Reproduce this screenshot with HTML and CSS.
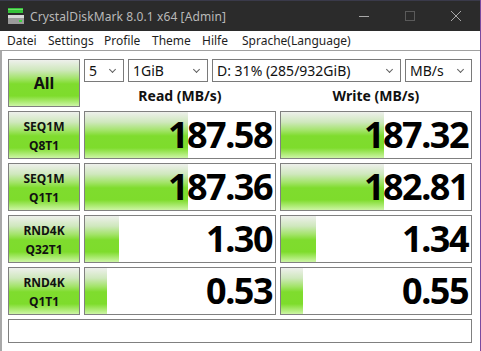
FILE: index.html
```html
<!DOCTYPE html>
<html>
<head>
<meta charset="utf-8">
<link rel="stylesheet" href="styles.css">
</head>
<body>
<div class="window">
  <div class="titlebar">
    <svg class="appicon" width="16" height="16" viewBox="0 0 16 16">
      <rect x="0" y="0" width="15" height="5" fill="#35c23a"/>
      <rect x="0" y="1" width="15" height="1" fill="#6fe06a"/>
      <rect x="0" y="7" width="16" height="9" fill="#9a9a9a"/>
      <rect x="0" y="7" width="16" height="3" fill="#d8d8d8"/>
      <rect x="11" y="12" width="3" height="2" fill="#3ad13a"/>
    </svg>
    <span class="title">CrystalDiskMark 8.0.1 x64 [Admin]</span>
    <div class="controls">
      <svg width="12" height="12" viewBox="0 0 12 12"><line x1="1" y1="6.5" x2="11" y2="6.5" stroke="#a8a8a8" stroke-width="1"/></svg>
      <svg width="12" height="12" viewBox="0 0 12 12"><rect x="1.5" y="1.5" width="9" height="9" fill="none" stroke="#5a5a5a" stroke-width="1"/></svg>
      <svg width="12" height="12" viewBox="0 0 12 12"><path d="M1 1 L11 11 M11 1 L1 11" stroke="#a8a8a8" stroke-width="1"/></svg>
    </div>
  </div>
  <div class="menubar">
    <span class="m1">Datei</span>
    <span class="m2">Settings</span>
    <span class="m3">Profile</span>
    <span class="m4">Theme</span>
    <span class="m5">Hilfe</span>
    <span class="m6">Sprache(Language)</span>
  </div>
  <div class="client">
    <div class="grid">
      <div class="btn all">All</div>
      <div class="topright">
        <div class="combos">
          <div class="combo c1"><span>5</span><i class="chev"></i></div>
          <div class="combo c2"><span>1GiB</span><i class="chev"></i></div>
          <div class="combo c3"><span>D: 31% (285/932GiB)</span><i class="chev"></i></div>
          <div class="combo c4"><span>MB/s</span><i class="chev"></i></div>
        </div>
        <div class="heads">
          <div class="head">Read (MB/s)</div>
          <div class="head">Write (MB/s)</div>
        </div>
      </div>

      <div class="btn label"><span>SEQ1M</span><span>Q8T1</span></div>
      <div class="cell"><div class="bar" style="width:103px"></div><span class="val">187.58</span></div>
      <div class="cell"><div class="bar" style="width:103px"></div><span class="val">187.32</span></div>

      <div class="btn label"><span>SEQ1M</span><span>Q1T1</span></div>
      <div class="cell"><div class="bar" style="width:103px"></div><span class="val">187.36</span></div>
      <div class="cell"><div class="bar" style="width:103px"></div><span class="val">182.81</span></div>

      <div class="btn label"><span>RND4K</span><span>Q32T1</span></div>
      <div class="cell"><div class="bar" style="width:34px"></div><span class="val">1.30</span></div>
      <div class="cell"><div class="bar" style="width:35px"></div><span class="val">1.34</span></div>

      <div class="btn label"><span>RND4K</span><span>Q1T1</span></div>
      <div class="cell"><div class="bar" style="width:22px"></div><span class="val">0.53</span></div>
      <div class="cell"><div class="bar" style="width:22px"></div><span class="val">0.55</span></div>

      <div class="status"></div>
    </div>
  </div>
</div>
</body>
</html>
```
FILE: styles.css
```css
* { box-sizing: border-box; margin: 0; padding: 0; }
html, body { width: 481px; height: 351px; overflow: hidden; background: #ffffff; }
body { font-family: "Noto Sans", "Open Sans", sans-serif; }

.window {
  width: 481px;
  height: 351px;
  border-right: 1px solid #7a4aa0;
  display: flex;
  flex-direction: column;
  background: #ffffff;
}

.titlebar {
  flex: none;
  height: 31px;
  background: #2b2b2b;
  border-top: 1px solid #3a3a4a;
  display: flex;
  align-items: center;
  padding-left: 8px;
}
.appicon { flex: none; margin-top: -1px; }
.title {
  margin-left: 6px;
  font-size: 12px;
  color: #b9b9b9;
  letter-spacing: 0.1px;
}
.controls {
  margin-left: auto;
  display: flex;
  gap: 34px;
  padding-right: 18px;
  margin-top: -1px;
}
.controls svg { display: block; }

.menubar {
  flex: none;
  height: 19px;
  display: flex;
  align-items: center;
  font-size: 12px;
  color: #1e1e1e;
  padding-left: 7px;
}
.menubar span { flex: none; }
.m1 { width: 41px; }
.m2 { width: 56px; }
.m3 { width: 48px; }
.m4 { width: 50px; }
.m5 { width: 40px; }

.client {
  flex: none;
  height: 301px;
  border-top: 1px solid #a0a0a0;
  border-left: 2px solid #a8a8a8;
  padding: 8px 0 0 6px;
}

.grid {
  display: grid;
  grid-template-columns: 72px 192px 192px;
  grid-auto-rows: 48px;
  column-gap: 4px;
  row-gap: 4px;
}

.btn {
  border: 1px solid #808080;
  background: linear-gradient(to bottom, #eef0ec 0%, #cfe8bd 22%, #a3e46a 40%, #7fdc2e 52%, #7edc2c 78%, #a9ea6e 90%, #cdf5a6 100%);
  color: #111;
  font-weight: bold;
  display: flex;
  flex-direction: column;
  align-items: center;
  justify-content: center;
}
.all { font-size: 16px; }
.label { font-size: 12px; line-height: 19px; padding-top: 1px; }

.topright {
  grid-column: 2 / 4;
  display: flex;
  flex-direction: column;
}
.combos {
  display: flex;
  gap: 4px;
  height: 23px;
}
.combo {
  border: 1px solid #7a7a7a;
  background: #fff;
  display: flex;
  align-items: center;
  padding-left: 4px;
  font-size: 14px;
  color: #111;
  position: relative;
}
.combo span { line-height: 20px; }
.c1 { width: 40px; }
.c2 { width: 80px; }
.c3 { width: 189px; }
.c4 { width: 67px; }
.chev {
  position: absolute;
  right: 8px;
  top: 7px;
  width: 5px;
  height: 5px;
  border-right: 1px solid #606060;
  border-bottom: 1px solid #606060;
  transform: rotate(45deg);
}
.heads {
  flex: 1;
  display: grid;
  grid-template-columns: 192px 192px;
  column-gap: 4px;
  align-items: center;
}
.head {
  text-align: center;
  font-size: 14px;
  font-weight: bold;
  color: #111;
  padding-top: 1px;
}

.cell {
  border: 1px solid #808080;
  background: #fff;
  position: relative;
  display: flex;
  align-items: center;
  justify-content: flex-end;
  padding-right: 3px;
}
.bar {
  position: absolute;
  left: 0;
  top: 0;
  bottom: 0;
  background: linear-gradient(to bottom, #eef0ec 0%, #cfe8bd 22%, #a3e46a 40%, #7fdc2e 52%, #7edc2c 78%, #a9ea6e 90%, #cdf5a6 100%);
}
.val {
  position: relative;
  font-size: 36px;
  font-weight: bold;
  letter-spacing: -1.5px;
  color: #000;
  line-height: 40px;
}

.status {
  grid-column: 1 / 4;
  height: 24px;
  border: 1px solid #808080;
  background: #fff;
}
```
